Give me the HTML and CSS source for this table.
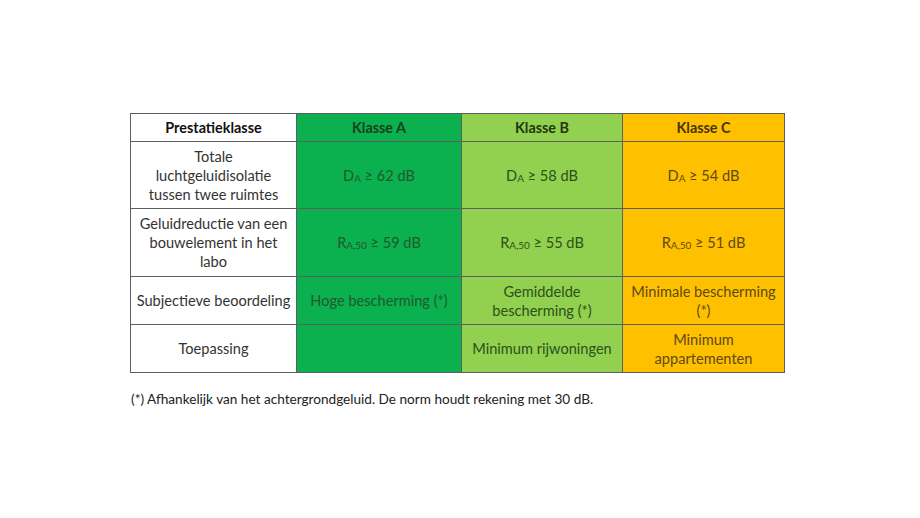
FILE: index.html
```html
<!DOCTYPE html>
<html lang="nl">
<head>
<meta charset="utf-8">
<title>Prestatieklasse</title>
<link rel="stylesheet" href="styles.css">
</head>
<body>
<div class="page">
  <table class="perf">
    <colgroup>
      <col class="c0"><col class="c1"><col class="c2"><col class="c3">
    </colgroup>
    <tr class="head">
      <th class="label">Prestatieklasse</th>
      <th class="a">Klasse A</th>
      <th class="b">Klasse B</th>
      <th class="c">Klasse C</th>
    </tr>
    <tr class="r1">
      <td class="label">Totale<br>luchtgeluidisolatie<br>tussen twee ruimtes</td>
      <td class="a">D<sub>A</sub> ≥ 62 dB</td>
      <td class="b">D<sub>A</sub> ≥ 58 dB</td>
      <td class="c">D<sub>A</sub> ≥ 54 dB</td>
    </tr>
    <tr class="r2">
      <td class="label">Geluidreductie van een<br>bouwelement in het<br>labo</td>
      <td class="a">R<sub>A,50</sub> ≥ 59 dB</td>
      <td class="b">R<sub>A,50</sub> ≥ 55 dB</td>
      <td class="c">R<sub>A,50</sub> ≥ 51 dB</td>
    </tr>
    <tr class="r3">
      <td class="label">Subjectieve beoordeling</td>
      <td class="a">Hoge bescherming (*)</td>
      <td class="b">Gemiddelde<br>bescherming (*)</td>
      <td class="c">Minimale bescherming<br>(*)</td>
    </tr>
    <tr class="r4">
      <td class="label">Toepassing</td>
      <td class="a"></td>
      <td class="b">Minimum rijwoningen</td>
      <td class="c">Minimum<br>appartementen</td>
    </tr>
  </table>
  <p class="note">(*) Afhankelijk van het achtergrondgeluid. De norm houdt rekening met 30 dB.</p>
</div>
</body>
</html>
```

FILE: styles.css
```css
html, body {
  margin: 0;
  padding: 0;
  background: #ffffff;
}

.page {
  width: 920px;
  height: 518px;
  box-sizing: border-box;
  padding: 113px 0 0 130px;
  font-family: Lato, "Open Sans", sans-serif;
  color: #3a3a3a;
}

.perf {
  border-collapse: collapse;
  width: 654px;
  table-layout: fixed;
  border: 1px solid #4a4a4a;
}

.c0 { width: 166px; }
.c1 { width: 165px; }
.c2 { width: 161px; }
.c3 { width: 162px; }

.perf th,
.perf td {
  border: 1px solid #5e5e5e;
  padding: 0 1px;
  text-align: center;
  vertical-align: middle;
  font-size: 14.6px;
  line-height: 19px;
}

.perf th {
  font-weight: 700;
  font-size: 14.4px;
  color: #1c1c1c;
}

.head { height: 28px; }
.r1 { height: 67px; }
.r2 { height: 68px; }
.r3 { height: 48px; }
.r4 { height: 48px; }

.perf .label {
  background: #ffffff;
  color: #333333;
}

.perf th.label { color: #111111; }

.perf .a { background: #0bb04f; }
.perf .b { background: #92d050; }
.perf .c { background: #ffc000; }

.perf td.a { color: #1f5a2b; }
.perf td.b { color: #2a5219; }
.perf td.c { color: #5e4a12; }

.perf th.a { color: #17421d; }
.perf th.b { color: #203810; }
.perf th.c { color: #463508; }

sub {
  font-size: 0.68em;
  vertical-align: -0.15em;
  line-height: 0;
}

.note {
  margin: 17px 0 0 1px;
  font-size: 13.6px;
  line-height: 18px;
  color: #222222;
}
```
